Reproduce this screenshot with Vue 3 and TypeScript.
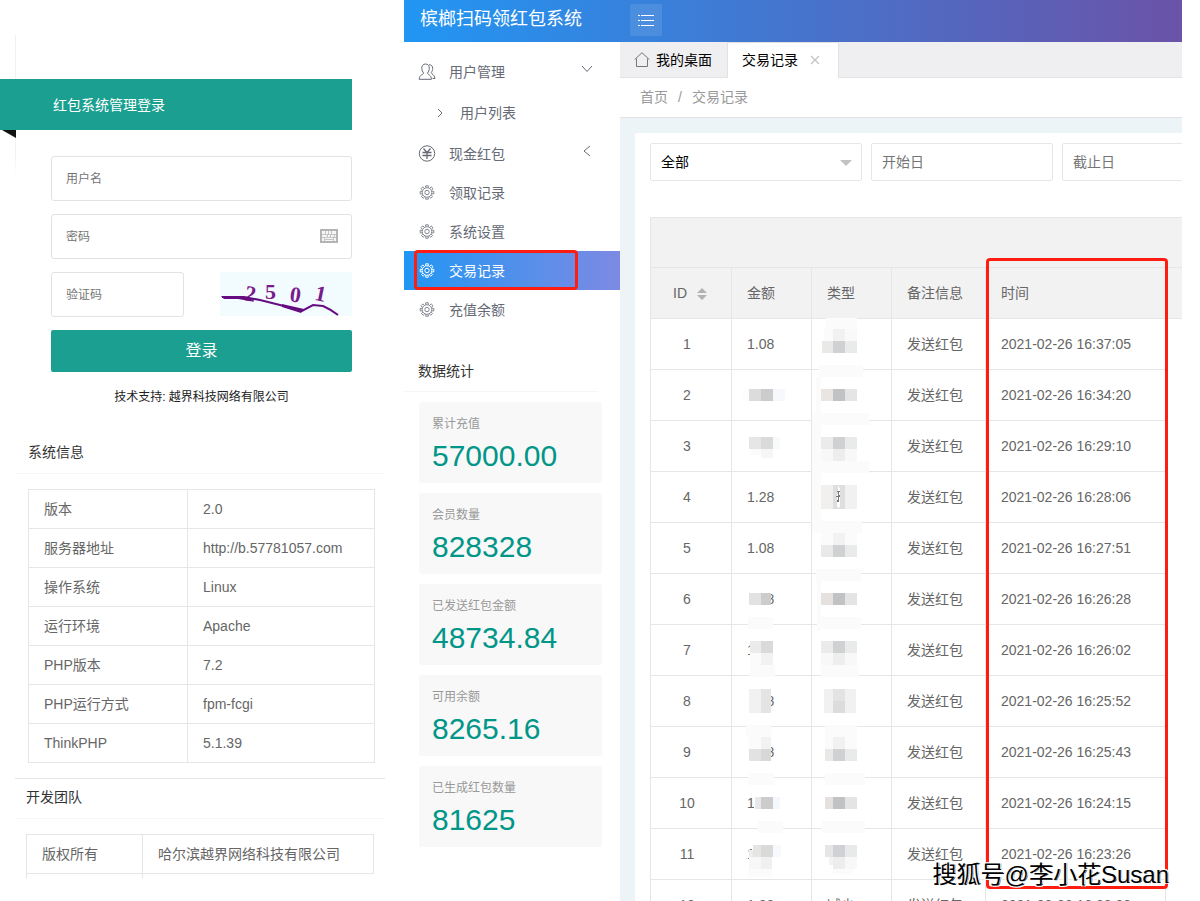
<script setup lang="ts">
import { ref } from 'vue'

interface NavItem {
  label: string
  icon: 'users' | 'arrow' | 'yen' | 'gear'
  level?: 'parent' | 'child'
  toggle?: 'open' | 'closed'
  active?: boolean
}

interface RecordRow {
  id: number
  amount: string
  type: string
  note: string
  time: string
}

type Block = [x: number, y: number, w: number, h: number, fill: string]

const username = ref('')
const password = ref('')
const captcha = ref('')
const kind = ref('all')
const startDate = ref('')
const endDate = ref('')

const systemInfo: [string, string][] = [
  ['版本', '2.0'],
  ['服务器地址', 'http://b.57781057.com'],
  ['操作系统', 'Linux'],
  ['运行环境', 'Apache'],
  ['PHP版本', '7.2'],
  ['PHP运行方式', 'fpm-fcgi'],
  ['ThinkPHP', '5.1.39'],
]

const navItems: NavItem[] = [
  { label: '用户管理', icon: 'users', level: 'parent', toggle: 'open' },
  { label: '用户列表', icon: 'arrow', level: 'child' },
  { label: '现金红包', icon: 'yen', toggle: 'closed' },
  { label: '领取记录', icon: 'gear' },
  { label: '系统设置', icon: 'gear' },
  { label: '交易记录', icon: 'gear', active: true },
  { label: '充值余额', icon: 'gear' },
]

const stats: [string, string][] = [
  ['累计充值', '57000.00'],
  ['会员数量', '828328'],
  ['已发送红包金额', '48734.84'],
  ['可用余额', '8265.16'],
  ['已生成红包数量', '81625'],
]

const rows: RecordRow[] = [
  ['1.08', '16:37:05'],
  ['', '16:34:20'],
  ['', '16:29:10'],
  ['1.28', '16:28:06'],
  ['1.08', '16:27:51'],
  ['1.08', '16:26:28'],
  ['1.08', '16:26:02'],
  ['1.08', '16:25:52'],
  ['1.08', '16:25:43'],
  ['1.08', '16:24:15'],
  ['1.08', '16:23:26'],
  ['1.08', '16:23:20'],
].map(([amount, clock], i) => ({
  id: i + 1,
  amount,
  type: i === 11 ? '减少' : '',
  note: '发送红包',
  time: `2021-02-26 ${clock}`,
}))

/* Pixelated cover over the private values of the amount and type columns */
const W = '#ffffff'
const F = '#fbfbfb'
const amountBlocks: Block[] = [
  [743, 389, 6, 12, '#fdfdfd'], [749, 389, 12, 12, '#dcdcdc'], [761, 389, 12, 12, '#cccccc'], [773, 389, 12, 12, '#f6f8fb'],
  [749, 437, 12, 12, '#e6e6e6'], [761, 437, 12, 12, '#dadada'], [773, 437, 7, 12, '#f8f9fa'],
  [751, 449, 10, 6, F], [761, 449, 12, 9, '#f6f6f6'],
  [745, 590, 26, 18, W], [749, 593, 12, 12, '#e2e2e2'], [761, 593, 10, 12, '#cccccc'],
  [748, 617, 25, 12, F],
  [750, 641, 26, 18, W], [750, 641, 11, 12, '#ebebeb'], [761, 641, 12, 12, '#dadada'],
  [750, 653, 11, 12, F], [761, 653, 12, 12, '#f2f2f2'], [750, 665, 25, 12, F],
  [745, 689, 25, 24, W], [749, 689, 12, 24, '#f1f1f1'], [761, 689, 10, 24, '#e4e4e4'],
  [746, 725, 25, 12, F],
  [745, 737, 26, 24, W], [749, 737, 12, 12, F], [761, 737, 10, 12, '#f2f2f2'],
  [749, 749, 12, 12, '#e2e2e2'], [761, 749, 10, 12, '#d8d8d8'],
  [748, 773, 26, 12, F],
  [754, 796, 24, 14, W], [755, 797, 6, 12, '#e8e8e8'], [761, 797, 12, 12, '#cccccc'], [773, 797, 7, 12, '#f4f8fc'],
  [758, 821, 25, 12, F],
  [752, 845, 26, 16, W], [749, 850, 12, 12, '#ededed'], [753, 845, 8, 12, '#e5e5e3'], [761, 845, 12, 12, '#dadada'],
  [773, 845, 8, 12, '#f7f9fc'], [749, 857, 12, 12, '#f7f7f7'], [761, 857, 11, 12, '#f0f0f0'], [748, 869, 24, 8, F],
]
const typeBlocks: Block[] = [
  [826, 318, 31, 11, F], [824, 329, 9, 12, F], [833, 329, 12, 12, '#f1f1f1'], [845, 329, 12, 12, '#f9f9f9'],
  [822, 341, 11, 12, '#e9e9e7'], [833, 341, 12, 12, '#cfd1d2'], [845, 341, 12, 12, '#e9eaea'],
  [819, 365, 44, 12, F], [816, 377, 5, 36, F],
  [821, 389, 12, 12, '#e9e5e2'], [833, 389, 12, 12, '#c1c2c4'], [845, 389, 12, 12, '#e5e5e6'],
  [812, 413, 57, 12, F], [812, 425, 9, 108, F],
  [821, 437, 12, 12, '#ebebeb'], [833, 437, 12, 12, '#cfd1d2'], [845, 437, 12, 12, '#e9eaea'],
  [821, 449, 12, 12, '#f8f8f8'], [833, 449, 12, 12, '#ededed'], [845, 449, 12, 12, '#f8f8f8'],
  [812, 461, 57, 12, F],
  [821, 485, 12, 24, '#f1f0ee'], [833, 485, 12, 24, '#dedede'], [845, 485, 12, 24, '#f1f1f1'],
  [812, 521, 50, 12, F],
  [821, 533, 12, 12, F], [833, 533, 12, 12, '#f2f2f2'], [845, 533, 12, 12, F],
  [821, 545, 12, 12, '#e9e9e9'], [833, 545, 12, 12, '#cfd1d2'], [845, 545, 12, 12, '#e9eaea'],
  [816, 569, 45, 12, F], [817, 581, 4, 50, F],
  [821, 593, 12, 12, '#e6e1df'], [833, 593, 12, 12, '#c1c2c4'], [845, 593, 12, 12, '#e4e4e5'],
  [818, 617, 43, 12, F],
  [821, 641, 12, 12, '#ebebeb'], [833, 641, 12, 12, '#cfd1d2'], [845, 641, 12, 12, '#e9eaea'],
  [821, 653, 12, 12, '#f8f8f8'], [833, 653, 12, 12, '#eeeeee'], [845, 653, 12, 12, '#f8f8f8'],
  [821, 665, 38, 12, F],
  [824, 689, 9, 24, '#f1f1f1'], [833, 689, 12, 12, '#e3e3e3'], [833, 701, 12, 12, '#dcdcdc'], [845, 689, 11, 24, '#f1f1f1'],
  [825, 725, 32, 12, F],
  [825, 737, 8, 12, F], [833, 737, 12, 12, '#f1f1f1'], [845, 737, 12, 12, F],
  [825, 749, 8, 12, '#e9e9e7'], [833, 749, 12, 12, '#cfd1d2'], [845, 749, 12, 12, '#e9eaea'],
  [825, 773, 40, 12, F],
  [825, 797, 8, 12, '#e6e1df'], [833, 797, 12, 12, '#c1c2c4'], [845, 797, 12, 12, '#e4e4e4'],
  [822, 821, 43, 12, F],
  [825, 845, 8, 12, '#e6e6e6'], [833, 845, 12, 12, '#cfd1d4'], [845, 845, 12, 12, '#e8e9e9'],
  [829, 857, 4, 8, '#f2f2f2'], [833, 857, 12, 12, '#ededed'], [845, 857, 12, 12, '#f8f8f8'], [833, 869, 20, 5, F],
]
const coverBlocks: Block[] = [...amountBlocks, ...typeBlocks]
</script>

<template>
  <div class="page">
    <aside class="left">
      <section class="login">
        <h1 class="ribbon">
          红包系统管理登录
          <svg class="fold" viewBox="0 0 16 8" aria-hidden="true"><path d="M2 0H16V8Z" fill="#111" /></svg>
        </h1>
        <form class="form" @submit.prevent>
          <input v-model="username" class="field" type="text" placeholder="用户名" aria-label="用户名" />
          <div class="password">
            <input v-model="password" class="field" type="password" placeholder="密码" aria-label="密码" />
            <svg class="keyboard" viewBox="0 0 18 14" aria-hidden="true">
              <rect x="1" y="1" width="16" height="12" fill="#f6f6f6" stroke="#b4b4b4" stroke-width="2" />
              <path d="M2 5.500H16M2 8.500H16M5.500 2V5M8.500 2V5M11.500 2V5M14.500 5V8M4.500 8V12M7.500 5V8M10.500 5V8M13.500 9V12M4 10.500H13" stroke="#c4c4c4" fill="none" />
            </svg>
          </div>
          <div class="verify">
            <input v-model="captcha" class="field" type="text" placeholder="验证码" aria-label="验证码" />
            <svg class="captcha" viewBox="0 0 132 44" role="img" aria-label="2501">
              <rect width="132" height="44" fill="#f2fbfe" />
              <g fill="#7a1a8c" font-family="'Liberation Serif', serif" font-weight="700" font-size="22">
                <text x="25" y="29" transform="rotate(10 30 22)">2</text>
                <text x="45" y="27">5</text>
                <text x="70" y="30" transform="rotate(8 75 22)">0</text>
                <text x="95" y="29" transform="rotate(12 100 22)">1</text>
              </g>
              <path d="M2 25H24L40 28L60 33L82 39L93 33L103 34Q110 37 118 43" fill="none" stroke="#650d80" stroke-width="2" />
              <path d="M1 24H20L32 27L30 29L18 27H4ZM62 32L84 37L81 41L62 35Z" fill="#650d80" />
            </svg>
          </div>
          <button class="submit" type="submit">登录</button>
        </form>
        <p class="support">技术支持: 越界科技网络有限公司</p>
      </section>

      <section class="info">
        <h2 class="info-title">系统信息</h2>
        <table class="info-table">
          <tbody>
            <tr v-for="[name, value] in systemInfo" :key="name">
              <th scope="row">{{ name }}</th>
              <td>{{ value }}</td>
            </tr>
          </tbody>
        </table>
      </section>

      <section class="team">
        <h2 class="team-title">开发团队</h2>
        <table class="info-table team-table">
          <tbody>
            <tr>
              <th scope="row">版权所有</th>
              <td>哈尔滨越界网络科技有限公司</td>
            </tr>
            <tr class="stub" aria-hidden="true"><td></td><td></td></tr>
          </tbody>
        </table>
      </section>
    </aside>

    <div class="admin">
      <header class="topbar">
        <div class="brand">槟榔扫码领红包系统</div>
        <button class="menu" type="button" aria-label="菜单">
          <svg viewBox="0 0 18 14" aria-hidden="true">
            <path d="M1 2.500H3M1 7.500H3M1 12.500H3M4 2.500H17M4 7.500H17M4 12.500H17" stroke="#fff" />
          </svg>
        </button>
      </header>

      <div class="body">
        <div class="sidebar">
          <nav class="nav">
            <a
              v-for="item in navItems"
              :key="item.label"
              href="#"
              class="nav-item"
              :class="[item.level, { active: item.active }]"
            >
              <svg v-if="item.icon === 'users'" class="icon" viewBox="0 0 18 18" fill="none" stroke="currentColor" aria-hidden="true">
                <path d="M7.500 1C5 1 3.800 2.900 3.800 5.100C3.800 7.200 4.600 8.900 5.600 10C5.600 11.600 1.200 11.700 1.200 16.300H13.400C13.400 11.700 9.500 11.600 9.500 10C10.500 8.900 11.300 7.200 11.300 5.100C11.300 2.900 10 1 7.500 1Z" />
                <path d="M11 1.700C13.500 1.600 14.700 3.300 14.700 5.500C14.700 7.200 14 8.600 13.200 9.500C13.300 11.200 16.900 11.600 16.900 15.500H14.500" />
              </svg>
              <svg v-else-if="item.icon === 'yen'" class="icon" viewBox="0 0 18 18" fill="none" stroke="currentColor" aria-hidden="true">
                <circle cx="9" cy="8.500" r="7.700" />
                <path d="M5.500 3.500L9 7.500L12.500 3.500M4.500 7.500H13.500M4.500 10.500H13.500M9 7.500V14" stroke-width="1.300" />
              </svg>
              <svg v-else-if="item.icon === 'gear'" class="icon gear" viewBox="0 0 18 18" fill="none" stroke="currentColor" aria-hidden="true">
                <circle cx="9" cy="8.500" r="4.800" />
                <circle cx="9" cy="8.500" r="2.200" />
                <path d="M7.700 3.700V1.800H10.300V3.700M11.800 4.200L13.200 2.900L15 4.700L13.600 6.300M13.900 7.300H15.800V9.900H13.800M13.200 11.100L14.500 12.500L12.800 14.200L11.400 13M10.300 13.300V15.200H7.700V13.300M6.600 13L5.200 14.200L3.500 12.500L4.800 11.100M4.200 9.900H2.200V7.300H4.100M4.400 6.300L3 4.700L4.800 2.900L6.200 4.200" />
              </svg>
              <svg v-else class="icon small" viewBox="0 0 10 10" fill="none" stroke="currentColor" aria-hidden="true">
                <path d="M3 1L7 5L3 9" />
              </svg>
              <span class="nav-label">{{ item.label }}</span>
              <svg v-if="item.toggle" class="toggle" viewBox="0 0 12 12" fill="none" stroke="currentColor" aria-hidden="true">
                <path :d="item.toggle === 'open' ? 'M1 3L6 8.500L11 3' : 'M9 1L3 6L9 11'" />
              </svg>
              <span v-if="item.active" class="mark nav-mark"></span>
            </a>
          </nav>

          <section class="stats">
            <h2 class="stats-title">数据统计</h2>
            <dl class="stat-list">
              <div v-for="[label, value] in stats" :key="label" class="stat">
                <dt>{{ label }}</dt>
                <dd>{{ value }}</dd>
              </div>
            </dl>
          </section>
        </div>

        <main class="main">
          <div class="tabs">
            <button class="tab" type="button">
              <svg class="home" viewBox="0 0 16 16" fill="none" stroke="#777" aria-hidden="true">
                <path d="M.7 7.500L8 .7L15.300 7.500M2.500 6.500V14.500H13.500V6.500" />
              </svg>
              我的桌面
            </button>
            <button class="tab current" type="button">
              交易记录
              <svg class="close" viewBox="0 0 10 10" fill="none" stroke="#c2c2c2" stroke-width="1.200" aria-hidden="true">
                <path d="M1 1L9 9M9 1L1 9" />
              </svg>
            </button>
          </div>

          <nav class="crumbs" aria-label="breadcrumb">
            <a href="#">首页</a><span>/</span><a href="#">交易记录</a>
          </nav>

          <div class="content">
            <div class="card">
              <form class="filters" @submit.prevent>
                <div class="select">
                  <select v-model="kind" aria-label="类型">
                    <option value="all">全部</option>
                  </select>
                  <svg viewBox="0 0 12 6" aria-hidden="true"><path d="M0 0H12L6 6Z" fill="#c2c2c2" /></svg>
                </div>
                <input v-model="startDate" type="text" placeholder="开始日" aria-label="开始日" />
                <input v-model="endDate" type="text" placeholder="截止日" aria-label="截止日" />
              </form>

              <div class="table-wrap">
                <table class="records">
                  <colgroup>
                    <col class="c-id" /><col class="c-amount" /><col class="c-amount" /><col class="c-note" /><col class="c-time" /><col />
                  </colgroup>
                  <thead>
                    <tr class="tools"><th colspan="6"></th></tr>
                    <tr>
                      <th class="id">
                        ID
                        <svg class="sort" viewBox="0 0 10 12" aria-hidden="true">
                          <path d="M0 5L5 0L10 5ZM0 7H10L5 12Z" fill="#b2b2b2" />
                        </svg>
                      </th>
                      <th>金额</th>
                      <th>类型</th>
                      <th>备注信息</th>
                      <th class="last">时间</th>
                      <th class="gutter"></th>
                    </tr>
                  </thead>
                  <tbody>
                    <tr v-for="row in rows" :key="row.id">
                      <td class="id">{{ row.id }}</td>
                      <td>{{ row.amount }}</td>
                      <td>{{ row.type }}</td>
                      <td>{{ row.note }}</td>
                      <td>{{ row.time }}</td>
                      <td class="gutter"></td>
                    </tr>
                  </tbody>
                </table>
                <svg class="cover" viewBox="651 218 240 683" shape-rendering="crispEdges" aria-hidden="true">
                  <rect v-for="(b, i) in coverBlocks" :key="i" :x="b[0]" :y="b[1]" :width="b[2]" :height="b[3]" :fill="b[4]" />
                  <path d="M838 485L840 489V506L838 509L837 504Z" fill="#fff" />
                  <path d="M837 491H840M838 491V502M836 496H840M840 495L837 502" fill="none" stroke="#777" />
                </svg>
                <span class="mark time-mark"></span>
              </div>
            </div>
          </div>
        </main>
      </div>
    </div>
    <div class="watermark">搜狐号@李小花Susan</div>
  </div>
</template>

<style>
body {
  margin: 0;
  background: #fff;
}
</style>

<style scoped>
.page {
  position: relative;
  display: flex;
  height: 100vh;
  overflow: hidden;
  box-sizing: border-box;
  padding-right: 18px;
  background: #fff;
  color: #666;
  font: 14px/24px "Liberation Sans", "Noto Sans CJK SC", sans-serif;
}
.page *,
.page *::before {
  box-sizing: border-box;
}
h1, h2, p, dl, dd {
  margin: 0;
  font-weight: 400;
}
a {
  color: inherit;
  text-decoration: none;
}
button, input, select {
  font: inherit;
}
svg {
  display: block;
  flex: none;
}

/* Login column */
.left {
  flex: none;
  width: 404px;
  padding: 35px 19px 0 15px;
}
.login {
  padding-top: 44px;
  background: linear-gradient(#eef1f2, #f0f0f6 120px, #fff 140px) no-repeat left / 1px 100%;
}
.ribbon {
  position: relative;
  height: 51px;
  margin: 0 33px 0 -15px;
  padding-left: 53px;
  background: #1a9f90;
  color: #fff;
  font-size: 14px;
  line-height: 52px;
}
.fold {
  position: absolute;
  top: 100%;
  left: 0;
  width: 16px;
  height: 8px;
}
.form {
  display: flex;
  flex-direction: column;
  gap: 13px;
  padding: 26px 33px 0 36px;
}
.field {
  display: block;
  width: 100%;
  height: 45px;
  padding: 0 14px;
  border: 1px solid #e2e2e2;
  border-radius: 3px;
  outline: none;
  background: #fff;
  font-size: 12px;
}
input::placeholder {
  color: #757575;
  opacity: 1;
}
.password {
  position: relative;
}
.keyboard {
  position: absolute;
  top: 15px;
  right: 14px;
  width: 18px;
  height: 14px;
}
.verify {
  display: grid;
  grid-template-columns: 133px 132px;
  justify-content: space-between;
}
.captcha {
  width: 132px;
  height: 44px;
}
.submit {
  height: 42px;
  padding: 0;
  border: 0;
  border-radius: 2px;
  background: #1a9f90;
  color: #fff;
  font-size: 16px;
}
.support {
  margin: 13px 33px 0 36px;
  color: #222;
  font-size: 12px;
  text-align: center;
}
.info {
  margin-top: 24px;
}
.info-title,
.team-title {
  border-bottom: 1px solid #f6f6f6;
  color: #333;
  font-size: 14px;
}
.info-title {
  height: 41px;
  padding-left: 13px;
  line-height: 38px;
}
.info-table {
  width: 347px;
  margin: 15px 0 0 13px;
  border-collapse: collapse;
  table-layout: fixed;
}
.info-table th,
.info-table td {
  height: 39px;
  padding: 0 15px;
  border: 1px solid #e6e6e6;
  font-weight: 400;
  text-align: left;
}
.info-table th {
  width: 159px;
}
.team {
  margin-top: 15px;
  border-top: 1px solid #e6e6e6;
}
.team-title {
  height: 40px;
  padding-left: 11px;
  line-height: 36px;
}
.team-table {
  width: 348px;
  margin-left: 11px;
}
.team-table th {
  width: 116px;
}
.info-table .stub td {
  height: 4px;
  padding: 0;
  border-right: 0;
  border-bottom: 0;
}

/* Admin shell */
.admin {
  display: flex;
  flex: 1;
  flex-direction: column;
  min-width: 0;
}
.topbar {
  display: flex;
  flex: none;
  align-items: flex-start;
  height: 42px;
  background: linear-gradient(to right, #2196f3, #6a53a8);
  color: #fff;
}
.brand {
  width: 226px;
  padding-left: 16px;
  font-size: 18px;
  line-height: 38px;
}
.menu {
  display: grid;
  place-items: center;
  width: 32px;
  height: 32px;
  margin-top: 4px;
  padding: 0;
  border: 0;
  border-radius: 2px;
  background: rgba(255, 255, 255, 0.1);
}
.menu svg {
  width: 18px;
  height: 14px;
}
.body {
  display: flex;
  flex: 1;
  min-height: 0;
}
.sidebar {
  flex: none;
  width: 216px;
}
.nav {
  padding-top: 9px;
}
.nav-item {
  position: relative;
  display: flex;
  align-items: center;
  height: 39px;
  padding: 0 27px 0 14px;
  color: #666a75;
}
.nav-item.parent {
  height: 41px;
}
.nav-item.child {
  height: 42px;
  padding-left: 31px;
}
.nav-item.active {
  background: linear-gradient(to right, #2196f3, #7d8ae3);
  color: #fff;
}
.icon {
  width: 18px;
  height: 18px;
  margin-right: 13px;
}
.gear {
  opacity: 0.8;
}
.active .gear {
  opacity: 1;
}
.icon.small {
  width: 10px;
  height: 10px;
  margin-right: 15px;
}
.nav-label {
  flex: 1;
}
.toggle {
  width: 12px;
  height: 12px;
  margin-bottom: 5px;
}
.mark {
  position: absolute;
  border: 3px solid #ff1d12;
  border-radius: 4px;
  pointer-events: none;
}
.nav-mark {
  top: -1px;
  left: 10px;
  width: 164px;
  height: 40px;
}
.stats {
  padding-top: 22px;
}
.stats-title {
  height: 41px;
  margin-right: 22px;
  padding-left: 14px;
  border-bottom: 1px solid #f6f6f6;
  color: #333;
  font-size: 14px;
  line-height: 40px;
}
.stat-list {
  display: flex;
  flex-direction: column;
  gap: 10px;
  padding: 10px 18px 0 15px;
}
.stat {
  height: 81px;
  padding: 10px 13px;
  border-radius: 2px;
  background: #f8f8f8;
}
.stat dt {
  color: #999;
  font-size: 12px;
}
.stat dd {
  color: #009688;
  font-size: 30px;
  line-height: 40px;
}

/* Main area */
.main {
  display: flex;
  flex: 1;
  flex-direction: column;
  min-width: 0;
}
.tabs {
  display: flex;
  flex: none;
  height: 36px;
  background: #efeef0;
  box-shadow: inset 0 -1px #e2e2e2;
}
.tab {
  display: flex;
  align-items: center;
  padding: 0 15px 0 14px;
  border: 0;
  background: transparent;
  color: #000;
}
.tab.current {
  padding: 0 18px 0 14px;
  border: 1px solid #e2e2e2;
  border-width: 0 1px;
  background: #fff;
  box-shadow: inset 0 1px #e2e2e2;
}
.home {
  width: 16px;
  height: 16px;
  margin-right: 6px;
}
.close {
  width: 10px;
  height: 10px;
  margin-left: 12px;
}
.crumbs {
  display: flex;
  flex: none;
  gap: 10px;
  height: 40px;
  padding-left: 20px;
  border-bottom: 1px solid #e2e2e2;
  color: #999;
  line-height: 38px;
}
.content {
  flex: 1;
  min-height: 0;
  padding: 15px 0 0 15px;
  background: #ecf4f8;
}
.card {
  height: 100%;
  padding: 10px 0 0 15px;
  border-radius: 2px 0 0 0;
  background: #fff;
  overflow: hidden;
}
.filters {
  display: grid;
  grid-template-columns: 212px 182px 182px;
  gap: 9px;
}
.filters input,
.filters select {
  width: 100%;
  height: 38px;
  padding: 0 10px;
  border: 1px solid #e6e6e6;
  border-radius: 2px;
  outline: none;
  background: #fff;
}
.filters select {
  appearance: none;
  color: #000;
}
.select {
  position: relative;
}
.select svg {
  position: absolute;
  top: 17px;
  right: 10px;
  width: 12px;
  height: 6px;
}
.table-wrap {
  position: relative;
  margin-top: 36px;
  border: 1px solid #e6e6e6;
  border-right: 0;
}
.records {
  width: 100%;
  border-collapse: separate;
  border-spacing: 0;
  table-layout: fixed;
}
.c-id { width: 81px; }
.c-amount { width: 80px; }
.c-note { width: 94px; }
.c-time { width: 180px; }
.records th,
.records td {
  height: 51px;
  padding: 0 15px;
  border: 0 solid #e6e6e6;
  border-width: 0 1px 1px 0;
  font-weight: 400;
  text-align: left;
  white-space: nowrap;
}
.records thead {
  background: #f2f2f2;
}
.records .tools th {
  height: 50px;
  border-right: 0;
}
.records td.id {
  padding: 0 8px 0 0;
  text-align: center;
}
.records th.id {
  padding-left: 22px;
}
.records th.last {
  border-right: 0;
}
.records .gutter {
  padding: 0;
  border-right: 0;
}
.records td.gutter {
  border-bottom: 0;
}
.sort {
  display: inline-block;
  width: 10px;
  height: 12px;
  margin-left: 6px;
  vertical-align: -2px;
}
.cover {
  position: absolute;
  top: 0;
  left: 0;
  width: 240px;
  height: 683px;
}
.time-mark {
  top: 40px;
  left: 335px;
  width: 182px;
  height: 631px;
}
.watermark {
  position: absolute;
  right: 31px;
  bottom: 10px;
  color: #000;
  font-size: 24px;
  line-height: 32px;
  text-shadow: -1px -1px 0 #fff, 1px -1px 0 #fff, -1px 1px 0 #fff, 1px 0 0 #000, 2px 1px 0 #fff;
  pointer-events: none;
}
</style>
